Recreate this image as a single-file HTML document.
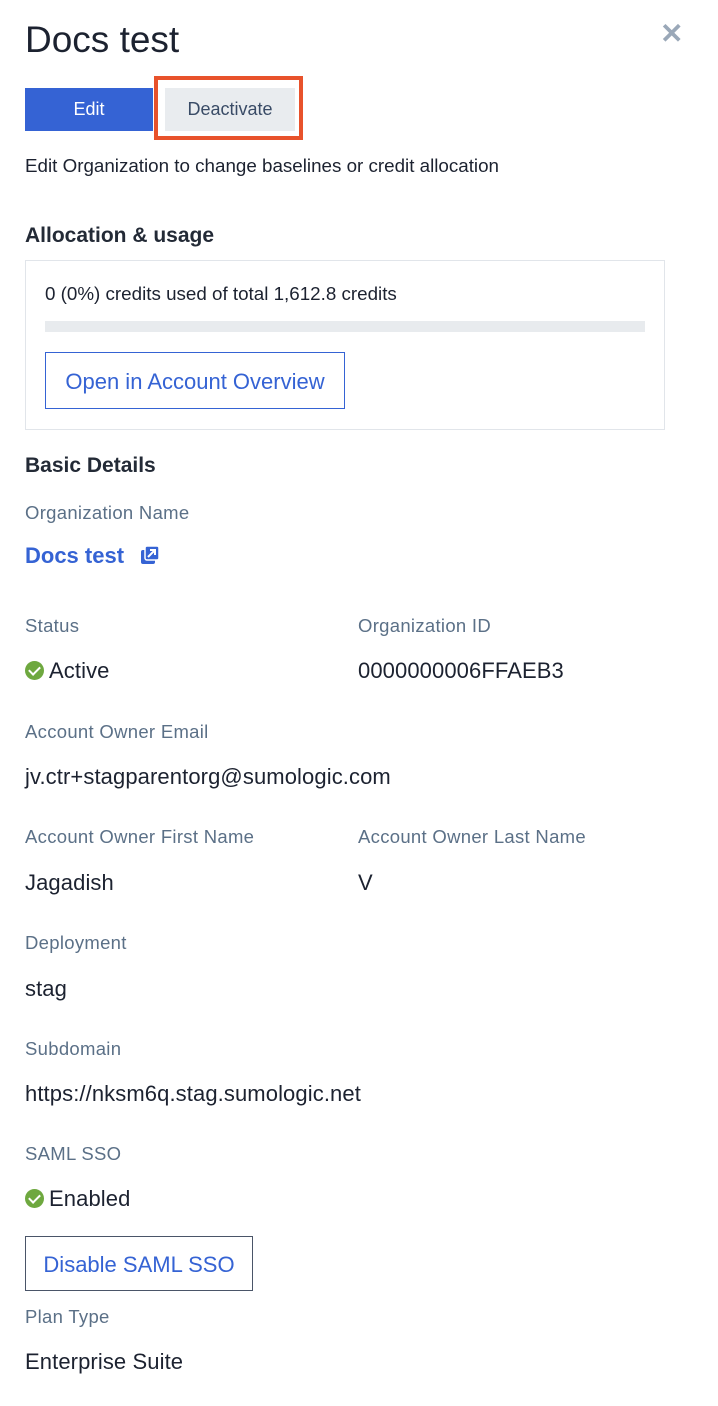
<!DOCTYPE html>
<html><head><meta charset="utf-8"><style>
*{margin:0;padding:0;box-sizing:border-box}
body{width:718px;height:1406px;background:#fff;font-family:"Liberation Sans",sans-serif;color:#1c2230;position:relative;overflow:hidden}
.a{position:absolute;white-space:nowrap}
.lab{font-size:18.5px;color:#5b7087;line-height:24px;letter-spacing:0.3px}
.val{font-size:22px;color:#1c2230;line-height:28px;letter-spacing:0.1px}
.chk{display:inline-block;width:19px;height:19px;border-radius:50%;background:#6ea83f;vertical-align:-2px;margin-right:5px;position:relative}
.chk:after{content:"";position:absolute;left:6px;top:3px;width:5px;height:9px;border:solid #fff;border-width:0 2.5px 2.5px 0;transform:rotate(45deg)}
</style></head><body>
<div class="a" style="left:25px;top:18px;font-size:37px;line-height:44px;color:#1c2230">Docs test</div>
<div class="a" style="left:660px;top:20px;font-size:28px;line-height:28px;color:#9aa8b8;font-weight:bold">✕</div>
<div class="a" style="left:25px;top:88px;width:128px;height:43px;background:#3563d4;color:#fff;font-size:18px;line-height:43px;text-align:center">Edit</div>
<div class="a" style="left:154px;top:76px;width:149px;height:64px;border:4px solid #e8522b"></div>
<div class="a" style="left:165px;top:88px;width:130px;height:43px;background:#e9ecef;color:#394b66;font-size:18px;line-height:43px;text-align:center">Deactivate</div>
<div class="a" style="left:25px;top:154px;font-size:18.8px;line-height:24px">Edit Organization to change baselines or credit allocation</div>
<div class="a" style="left:25px;top:222px;font-size:21px;line-height:28px;font-weight:bold;color:#232a36">Allocation &amp; usage</div>
<div class="a" style="left:25px;top:260px;width:640px;height:170px;border:1px solid #e1e5ea"></div>
<div class="a" style="left:45px;top:282px;font-size:18.8px;line-height:24px">0 (0%) credits used of total 1,612.8 credits</div>
<div class="a" style="left:45px;top:321px;width:600px;height:11px;background:#e8ebee"></div>
<div class="a" style="left:45px;top:352px;width:300px;height:57px;border:1px solid #3563d4;color:#3563d4;font-size:22px;line-height:57px;text-align:center">Open in Account Overview</div>
<div class="a" style="left:25px;top:452px;font-size:21px;line-height:28px;font-weight:bold;color:#232a36">Basic Details</div>
<div class="a lab" style="left:25px;top:501px">Organization Name</div>
<div class="a" style="left:25px;top:542px;font-size:22px;line-height:28px;color:#3563d4;font-weight:bold">Docs test
<svg width="20" height="20" viewBox="0 0 20 20" style="vertical-align:-2px;margin-left:10px"><rect x="1" y="5" width="14" height="14" rx="2" fill="#3563d4"/><rect x="5" y="1" width="14" height="14" rx="2" fill="#3563d4" stroke="#fff" stroke-width="1.5"/><path d="M8 12 L15 5 M10 5 H15 V10" stroke="#fff" stroke-width="2" fill="none"/></svg></div>
<div class="a lab" style="left:25px;top:614px">Status</div>
<div class="a val" style="left:25px;top:657px"><span class="chk"></span>Active</div>
<div class="a lab" style="left:358px;top:614px">Organization ID</div>
<div class="a val" style="left:358px;top:657px">0000000006FFAEB3</div>
<div class="a lab" style="left:25px;top:720px">Account Owner Email</div>
<div class="a val" style="left:25px;top:763px">jv.ctr+stagparentorg@sumologic.com</div>
<div class="a lab" style="left:25px;top:825px">Account Owner First Name</div>
<div class="a val" style="left:25px;top:869px">Jagadish</div>
<div class="a lab" style="left:358px;top:825px">Account Owner Last Name</div>
<div class="a val" style="left:358px;top:869px">V</div>
<div class="a lab" style="left:25px;top:931px">Deployment</div>
<div class="a val" style="left:25px;top:975px">stag</div>
<div class="a lab" style="left:25px;top:1037px">Subdomain</div>
<div class="a val" style="left:25px;top:1080px">https://nksm6q.stag.sumologic.net</div>
<div class="a lab" style="left:25px;top:1142px">SAML SSO</div>
<div class="a val" style="left:25px;top:1185px"><span class="chk"></span>Enabled</div>
<div class="a" style="left:25px;top:1236px;width:228px;height:55px;border:1px solid #4a5568;color:#3563d4;font-size:22px;line-height:55px;text-align:center">Disable SAML SSO</div>
<div class="a lab" style="left:25px;top:1305px">Plan Type</div>
<div class="a val" style="left:25px;top:1348px">Enterprise Suite</div>
</body></html>
